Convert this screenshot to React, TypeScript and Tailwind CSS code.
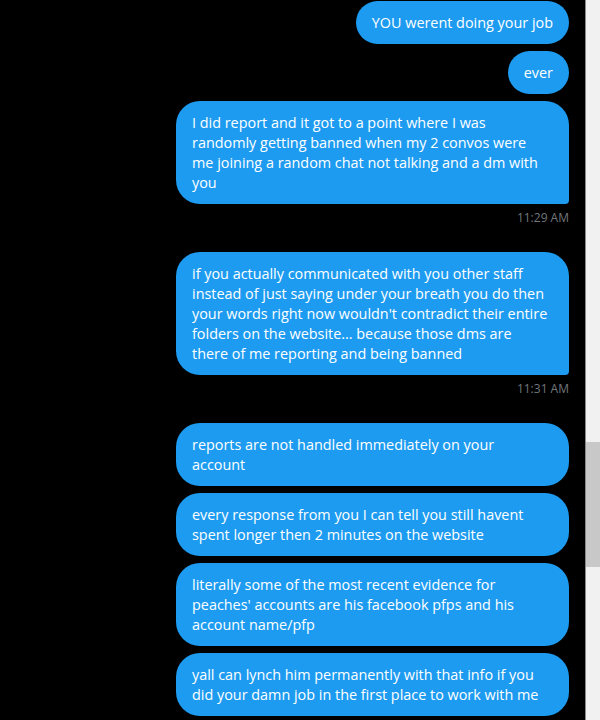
import React from "react";

type Msg = { lines: string[]; full?: boolean; tail?: boolean; time?: string };

const messages: Msg[] = [
  { lines: ["YOU werent doing your job"] },
  { lines: ["ever"] },
  {
    lines: [
      "I did report and it got to a point where I was",
      "randomly getting banned when my 2 convos were",
      "me joining a random chat not talking and a dm with",
      "you",
    ],
    full: true,
    tail: true,
    time: "11:29 AM",
  },
  {
    lines: [
      "if you actually communicated with you other staff",
      "instead of just saying under your breath you do then",
      "your words right now wouldn't contradict their entire",
      "folders on the website... because those dms are",
      "there of me reporting and being banned",
    ],
    full: true,
    tail: true,
    time: "11:31 AM",
  },
  { lines: ["reports are not handled immediately on your", "account"], full: true },
  {
    lines: ["every response from you I can tell you still havent", "spent longer then 2 minutes on the website"],
    full: true,
  },
  {
    lines: [
      "literally some of the most recent evidence for",
      "peaches' accounts are his facebook pfps and his",
      "account name/pfp",
    ],
    full: true,
  },
  {
    lines: ["yall can lynch him permanently with that info if you", "did your damn job in the first place to work with me"],
    full: true,
  },
];

function Bubble({ m }: { m: Msg }) {
  return (
    <div className="flex flex-col items-end">
      <div
        className={
          "bg-[#1d9bf0] text-white px-4 py-[11.5px] text-[14.4px] leading-5 " +
          (m.full ? "w-[393px] " : "") +
          (m.tail ? "rounded-t-3xl rounded-bl-3xl rounded-br-[4px]" : "rounded-3xl")
        }
      >
        {m.lines.map((l, i) => (
          <div key={i} className="whitespace-nowrap">
            {l}
          </div>
        ))}
      </div>
      {m.time && (
        <div className="mt-[6px] mb-[19px] text-[12px] leading-4 text-[#71767b]">{m.time}</div>
      )}
    </div>
  );
}

export default function App() {
  return (
    <div className="flex h-[720px] w-[600px] overflow-hidden bg-black font-['Open_Sans',sans-serif]">
      <div className="flex flex-1 flex-col gap-[7px] pt-px pr-4">
        {messages.map((m, i) => (
          <Bubble key={i} m={m} />
        ))}
      </div>
      <div className="flex w-[15px] flex-col border-l border-[#8a8a8a] bg-[#f1f1f1] pt-[442px]">
        <div className="h-[125px] bg-[#c8c8c8]" />
      </div>
    </div>
  );
}
